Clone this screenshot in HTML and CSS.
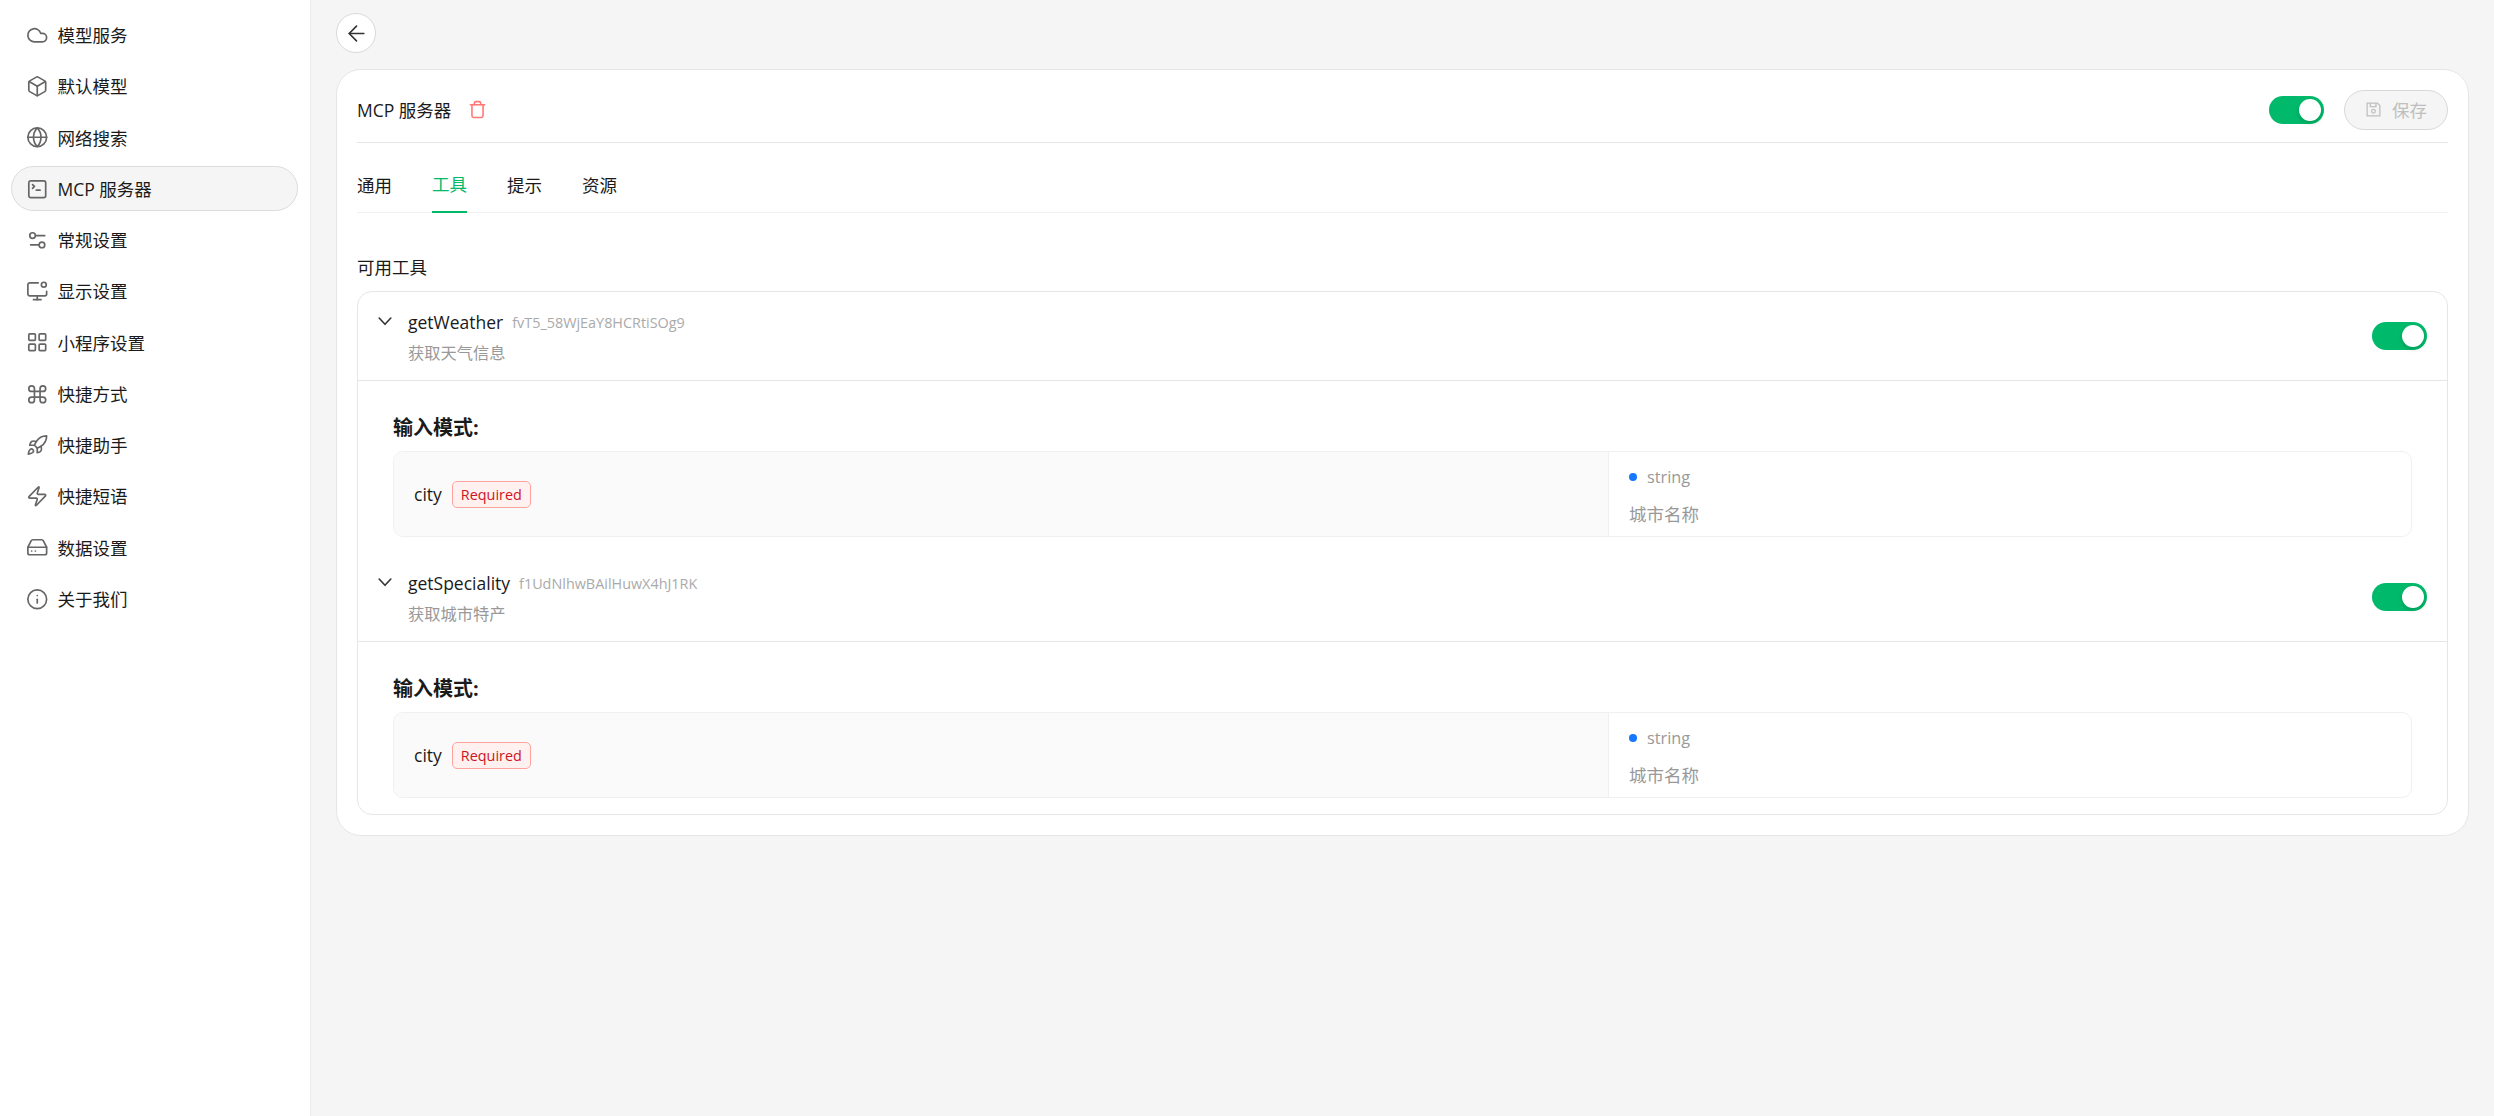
FILE: index.html
```html
<!DOCTYPE html>
<html lang="zh">
<head>
<meta charset="utf-8">
<title>MCP 服务器</title>
<link rel="stylesheet" href="styles.css">
</head>
<body>
<aside class="sidebar">
  <a class="nav-item"><svg class="nav-icon" viewBox="0 0 24 24"><path d="M17.5 19H9a7 7 0 1 1 6.71-9h1.79a4.5 4.5 0 1 1 0 9Z"/></svg><span>模型服务</span></a>
  <a class="nav-item"><svg class="nav-icon" viewBox="0 0 24 24"><path d="M21 8a2 2 0 0 0-1-1.73l-7-4a2 2 0 0 0-2 0l-7 4A2 2 0 0 0 3 8v8a2 2 0 0 0 1 1.73l7 4a2 2 0 0 0 2 0l7-4A2 2 0 0 0 21 16Z"/><path d="m3.3 7 8.7 5 8.7-5"/><path d="M12 22V12"/></svg><span>默认模型</span></a>
  <a class="nav-item"><svg class="nav-icon" viewBox="0 0 24 24"><circle cx="12" cy="12" r="10"/><path d="M12 2a14.5 14.5 0 0 0 0 20 14.5 14.5 0 0 0 0-20"/><path d="M2 12h20"/></svg><span>网络搜索</span></a>
  <a class="nav-item active"><svg class="nav-icon" viewBox="0 0 24 24"><path d="m7 11 2-2-2-2"/><path d="M11 13h4"/><rect x="3" y="3" width="18" height="18" rx="2"/></svg><span>MCP 服务器</span></a>
  <a class="nav-item"><svg class="nav-icon" viewBox="0 0 24 24"><path d="M20 7h-9"/><path d="M14 17H5"/><circle cx="17" cy="17" r="3"/><circle cx="7" cy="7" r="3"/></svg><span>常规设置</span></a>
  <a class="nav-item"><svg class="nav-icon" viewBox="0 0 24 24"><path d="M12 17v4"/><path d="M8 21h8"/><path d="M22 12v3a2 2 0 0 1-2 2H4a2 2 0 0 1-2-2V5a2 2 0 0 1 2-2h9"/><circle cx="19" cy="5" r="2.6"/></svg><span>显示设置</span></a>
  <a class="nav-item"><svg class="nav-icon" viewBox="0 0 24 24"><rect x="3" y="3" width="7" height="7" rx="1"/><rect x="14" y="3" width="7" height="7" rx="1"/><rect x="14" y="14" width="7" height="7" rx="1"/><rect x="3" y="14" width="7" height="7" rx="1"/></svg><span>小程序设置</span></a>
  <a class="nav-item"><svg class="nav-icon" viewBox="0 0 24 24"><path d="M15 6v12a3 3 0 1 0 3-3H6a3 3 0 1 0 3 3V6a3 3 0 1 0-3 3h12a3 3 0 1 0-3-3"/></svg><span>快捷方式</span></a>
  <a class="nav-item"><svg class="nav-icon" viewBox="0 0 24 24"><path d="M4.5 16.5c-1.5 1.26-2 5-2 5s3.74-.5 5-2c.71-.84.7-2.13-.09-2.91a2.18 2.18 0 0 0-2.91-.09z"/><path d="m12 15-3-3a22 22 0 0 1 2-3.95A12.88 12.88 0 0 1 22 2c0 2.72-.78 7.5-6 11a22.35 22.35 0 0 1-4 2z"/><path d="M9 12H4s.55-3.03 2-4c1.62-1.08 5 0 5 0"/><path d="M12 15v5s3.03-.55 4-2c1.08-1.62 0-5 0-5"/></svg><span>快捷助手</span></a>
  <a class="nav-item"><svg class="nav-icon" viewBox="0 0 24 24"><path d="M4 14a1 1 0 0 1-.78-1.63l9.9-10.2a.5.5 0 0 1 .86.46l-1.92 6.02A1 1 0 0 0 13 10h7a1 1 0 0 1 .78 1.63l-9.9 10.2a.5.5 0 0 1-.86-.46l1.92-6.02A1 1 0 0 0 11 14z"/></svg><span>快捷短语</span></a>
  <a class="nav-item"><svg class="nav-icon" viewBox="0 0 24 24"><path d="M22 12H2"/><path d="M5.45 5.11 2 12v6a2 2 0 0 0 2 2h16a2 2 0 0 0 2-2v-6l-3.45-6.89A2 2 0 0 0 16.76 4H7.24a2 2 0 0 0-1.79 1.11z"/><path d="M6 16h.01"/><path d="M10 16h.01"/></svg><span>数据设置</span></a>
  <a class="nav-item"><svg class="nav-icon" viewBox="0 0 24 24"><circle cx="12" cy="12" r="10"/><path d="M12 16v-4"/><path d="M12 8h.01"/></svg><span>关于我们</span></a>
</aside>
<main class="main">
  <button class="back"><svg class="back-icon" viewBox="0 0 24 24"><path d="m12 19-7-7 7-7"/><path d="M19 12H5"/></svg></button>
  <section class="card">
    <header class="card-head">
      <div class="title-wrap">
        <span class="title">MCP 服务器</span>
        <svg class="trash" viewBox="0 0 24 24"><path d="M3 6h18"/><path d="M19 6v14c0 1-1 2-2 2H7c-1 0-2-1-2-2V6"/><path d="M8 6V4c0-1 1-2 2-2h4c1 0 2 1 2 2v2"/></svg>
      </div>
      <div class="head-actions">
        <span class="switch"><span class="knob"></span></span>
        <button class="save"><svg class="save-icon" viewBox="0 0 24 24"><path d="M3 3h14.5L21 6.5V21H3z"/><path d="M7.5 3v5h8V3"/><circle cx="12" cy="14.5" r="2.6"/></svg><span>保存</span></button>
      </div>
    </header>
    <nav class="tabs">
      <span class="tab">通用</span>
      <span class="tab tab-on">工具</span>
      <span class="tab">提示</span>
      <span class="tab">资源</span>
    </nav>
    <h2 class="section-title">可用工具</h2>
    <div class="tools">
      <article class="tool">
        <div class="tool-head">
          <svg class="chevron" viewBox="0 0 24 24"><path d="m5 8.5 7 7.5 7-7.5"/></svg>
          <div class="tool-meta">
            <div class="tool-line"><span class="tool-name">getWeather</span><span class="tool-id">fvT5_58WjEaY8HCRtiSOg9</span></div>
            <div class="tool-desc">获取天气信息</div>
          </div>
          <span class="switch"><span class="knob"></span></span>
        </div>
        <div class="tool-body">
          <h3 class="schema-title">输入模式:</h3>
          <div class="schema">
            <div class="schema-key"><span class="key-name">city</span><span class="tag">Required</span></div>
            <div class="schema-val">
              <div class="type-line"><span class="dot"></span><span class="type">string</span></div>
              <div class="val-desc">城市名称</div>
            </div>
          </div>
        </div>
      </article>
      <article class="tool">
        <div class="tool-head">
          <svg class="chevron" viewBox="0 0 24 24"><path d="m5 8.5 7 7.5 7-7.5"/></svg>
          <div class="tool-meta">
            <div class="tool-line"><span class="tool-name">getSpeciality</span><span class="tool-id">f1UdNlhwBAilHuwX4hJ1RK</span></div>
            <div class="tool-desc">获取城市特产</div>
          </div>
          <span class="switch"><span class="knob"></span></span>
        </div>
        <div class="tool-body">
          <h3 class="schema-title">输入模式:</h3>
          <div class="schema">
            <div class="schema-key"><span class="key-name">city</span><span class="tag">Required</span></div>
            <div class="schema-val">
              <div class="type-line"><span class="dot"></span><span class="type">string</span></div>
              <div class="val-desc">城市名称</div>
            </div>
          </div>
        </div>
      </article>
    </div>
  </section>
</main>
</body>
</html>
```
FILE: styles.css
```css
* { box-sizing: border-box; }
html, body { height: 100%; }
body {
  margin: 0;
  display: flex;
  height: 1116px;
  overflow: hidden;
  background: #f5f5f5;
  color: #1a1a1a;
  font-family: "Open Sans", "Noto Sans CJK SC", sans-serif;
  font-size: 17.5px;
}
.sidebar {
  flex: 0 0 311px;
  background: #fff;
  border-right: 1px solid #ebebeb;
  padding: 12.5px 12px 0 11px;
  display: flex;
  flex-direction: column;
  gap: 6.25px;
}
.nav-item {
  height: 45px;
  flex: none;
  display: flex;
  align-items: center;
  gap: 9.5px;
  padding-left: 13.5px;
  border: 1px solid transparent;
  border-radius: 23px;
  color: #1a1a1a;
}
.nav-item span { padding-bottom: 1px; }
.nav-item.active { background: #f5f5f5; border-color: #dcdcdc; }
.nav-icon {
  width: 22.5px;
  height: 22.5px;
  flex: none;
  fill: none;
  stroke: #666;
  stroke-width: 1.8;
  stroke-linecap: round;
  stroke-linejoin: round;
}
.main {
  flex: 1;
  padding: 13px 25px 0;
  display: flex;
  flex-direction: column;
  align-items: flex-start;
}
.back {
  width: 40px;
  height: 40px;
  padding: 0;
  border: 1px solid #d9d9d9;
  border-radius: 50%;
  background: #fff;
  display: flex;
  align-items: center;
  justify-content: center;
}
.back-icon {
  width: 25px;
  height: 25px;
  fill: none;
  stroke: #333;
  stroke-width: 1.6;
  stroke-linecap: round;
  stroke-linejoin: round;
}
.card {
  width: 2133px;
  margin-top: 16px;
  height: 767px;
  background: #fff;
  border: 1px solid #e6e6e6;
  border-radius: 25px;
  padding: 0 20px;
}
.card-head {
  height: 73px;
  padding-top: 7px;
  display: flex;
  align-items: center;
  justify-content: space-between;
  border-bottom: 1px solid #e6e6e6;
}
.title-wrap { display: flex; align-items: center; gap: 17px; }
.title { font-size: 17.5px; }
.trash {
  width: 19px;
  height: 19px;
  fill: none;
  stroke: #ff7875;
  stroke-width: 2;
  stroke-linecap: round;
  stroke-linejoin: round;
}
.head-actions { display: flex; align-items: center; gap: 20px; }
.switch {
  flex: none;
  width: 55px;
  height: 28px;
  border-radius: 14px;
  background: #00b96b;
  padding: 3px;
  display: flex;
  justify-content: flex-end;
}
.knob {
  width: 22px;
  height: 22px;
  border-radius: 50%;
  background: #fff;
  box-shadow: 0 2px 4px rgba(0, 35, 11, .2);
}
.save {
  width: 104px;
  height: 40px;
  padding: 0;
  border: 1px solid #d9d9d9;
  border-radius: 20px;
  background: #f5f5f5;
  color: #bfbfbf;
  font: inherit;
  display: flex;
  align-items: center;
  justify-content: center;
  gap: 10px;
}
.save-icon {
  width: 17px;
  height: 17px;
  fill: none;
  stroke: #bfbfbf;
  stroke-width: 1.8;
}
.tabs {
  height: 70px;
  display: flex;
  gap: 40px;
  border-bottom: 1px solid #f0f0f0;
}
.tab {
  height: 70px;
  padding-top: 12px;
  display: flex;
  align-items: center;
  color: #1a1a1a;
}
.tab-on { color: #00b96b; border-bottom: 2px solid #00b96b; }
.section-title {
  margin: 0;
  height: 78px;
  padding-top: 41px;
  font-size: 17.5px;
  line-height: 26px;
  font-weight: 400;
}
.tools {
  border: 1px solid #e6e6e6;
  border-radius: 15px;
  height: 524px;
}
.tool { height: 261px; }
.tool-head {
  height: 89px;
  display: flex;
  align-items: flex-start;
  padding: 0 20px 0 17px;
  border-bottom: 1px solid #e6e6e6;
}
.chevron {
  width: 20px;
  height: 20px;
  margin-top: 19px;
  flex: none;
  fill: none;
  stroke: #333;
  stroke-width: 1.9;
  stroke-linecap: round;
  stroke-linejoin: round;
}
.tool-meta { flex: 1; margin-left: 13px; padding-top: 16px; }
.tool-line { display: flex; align-items: center; gap: 9px; height: 28px; }
.tool-name { font-size: 17.5px; color: #1a1a1a; }
.tool-id { font-size: 14.4px; color: #aaa; }
.tool-desc { margin-top: 5px; font-size: 16.25px; line-height: 24px; color: #999; }
.tool-head .switch { margin-top: 30px; }
.tool-body { padding: 32px 35px 0; }
.schema-title {
  margin: 0 0 8px;
  font-size: 20px;
  line-height: 30px;
  font-weight: 700;
}
.schema {
  display: flex;
  height: 86px;
  border: 1px solid #f0f0f0;
  border-radius: 10px;
  overflow: hidden;
}
.schema-key {
  flex: 0 0 1215px;
  display: flex;
  align-items: center;
  gap: 10px;
  padding-left: 20px;
  background: #fafafa;
  border-right: 1px solid #f0f0f0;
}
.key-name { font-size: 17.5px; }
.tag {
  height: 27px;
  padding: 0 8px;
  border: 1px solid #ffa39e;
  border-radius: 5px;
  background: #fff1f0;
  color: #cf1322;
  font-size: 14.4px;
  line-height: 25px;
}
.schema-val { flex: 1; padding: 12px 20px 0; }
.type-line { display: flex; align-items: center; gap: 10px; height: 26px; }
.dot { width: 8px; height: 8px; border-radius: 50%; background: #1677ff; }
.type { font-size: 16.25px; color: #999; }
.val-desc { margin-top: 11px; font-size: 17.5px; line-height: 26px; color: #999; }
```
